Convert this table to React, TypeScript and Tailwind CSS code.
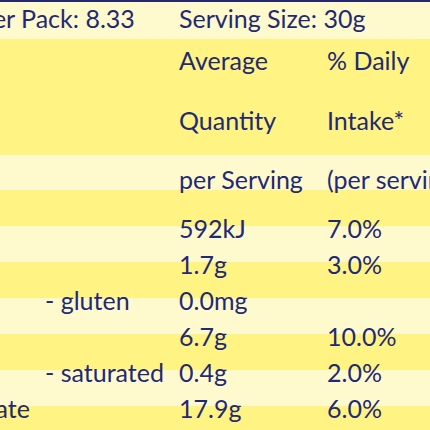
const rows = [
  { label: "Energy", sub: "", avg: "592kJ", daily: "7.0%" },
  { label: "Protein", sub: "", avg: "1.7g", daily: "3.0%" },
  { label: "", sub: "- gluten", avg: "0.0mg", daily: "" },
  { label: "Fat, total", sub: "", avg: "6.7g", daily: "10.0%" },
  { label: "", sub: "- saturated", avg: "0.4g", daily: "2.0%" },
  { label: "Carbohydrate", sub: "", avg: "17.9g", daily: "6.0%" },
];

function Cells({ label, sub, avg, daily }: { label: string; sub: string; avg: string; daily: string }) {
  return (
    <div className="grid grid-cols-[167px_134px_148px_1fr] whitespace-nowrap">
      <div className="pl-[2px]">{label}</div>
      <div>{sub}</div>
      <div>{avg}</div>
      <div>{daily}</div>
    </div>
  );
}

export default function App() {
  return (
    <div className="w-[430px] h-[430px] overflow-hidden bg-[#fff383]">
      <div
        className="-ml-[122px] w-[620px] border-t-2 border-[#262a6b] text-[25px] leading-[30px] text-[#1f2a74]"
        style={{ fontFamily: "Lato, 'Open Sans', sans-serif" }}
      >
        <div className="h-[37px] bg-[#fffacd] pt-[1px]">
          <div className="grid grid-cols-[301px_1fr] whitespace-nowrap">
            <div className="pl-[2px]">Servings per Pack: 8.33</div>
            <div>Serving Size: 30g</div>
          </div>
        </div>

        <div className="h-[116px] bg-[#fff383] pt-[6px]">
          <div className="h-[60px]">
            <Cells label="" sub="" avg="Average" daily="% Daily" />
          </div>
          <Cells label="" sub="" avg="Quantity" daily="Intake*" />
        </div>

        <div className="h-[35px] bg-[#fffacd] pt-[9px]">
          <Cells label="" sub="" avg="per Serving" daily="(per serving)" />
        </div>

        <div className="h-[36px] bg-[#fff383]" />

        {rows.map((r, i) => (
          <div key={i} className={`flex flex-col h-[36px] ${i % 2 === 0 ? "bg-[#fffacd]" : "bg-[#fff383]"}`}>
            <div className="-mt-[13px]">
              <Cells {...r} />
            </div>
          </div>
        ))}
      </div>
    </div>
  );
}
